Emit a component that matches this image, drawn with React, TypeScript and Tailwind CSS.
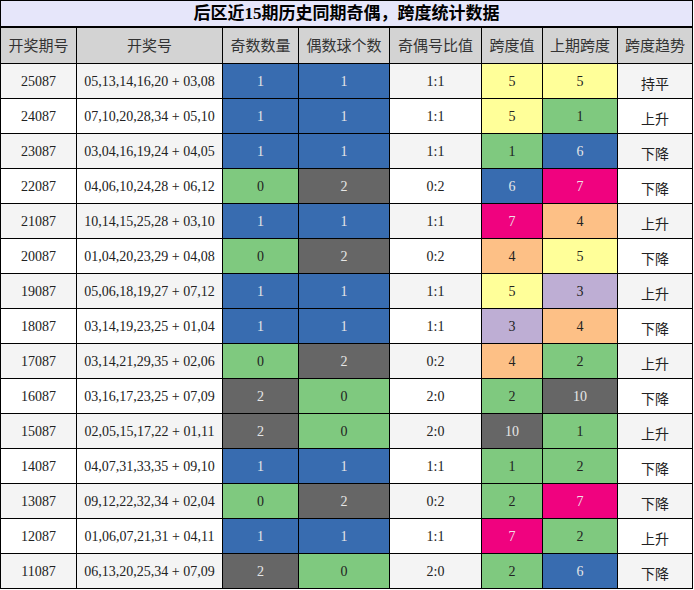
import React from "react";

type Row = [string, string, number, number, string, number, number, string];

const rows: Row[] = [
  ["25087", "05,13,14,16,20 + 03,08", 1, 1, "1:1", 5, 5, "持平"],
  ["24087", "07,10,20,28,34 + 05,10", 1, 1, "1:1", 5, 1, "上升"],
  ["23087", "03,04,16,19,24 + 04,05", 1, 1, "1:1", 1, 6, "下降"],
  ["22087", "04,06,10,24,28 + 06,12", 0, 2, "0:2", 6, 7, "下降"],
  ["21087", "10,14,15,25,28 + 03,10", 1, 1, "1:1", 7, 4, "上升"],
  ["20087", "01,04,20,23,29 + 04,08", 0, 2, "0:2", 4, 5, "下降"],
  ["19087", "05,06,18,19,27 + 07,12", 1, 1, "1:1", 5, 3, "上升"],
  ["18087", "03,14,19,23,25 + 01,04", 1, 1, "1:1", 3, 4, "下降"],
  ["17087", "03,14,21,29,35 + 02,06", 0, 2, "0:2", 4, 2, "上升"],
  ["16087", "03,16,17,23,25 + 07,09", 2, 0, "2:0", 2, 10, "下降"],
  ["15087", "02,05,15,17,22 + 01,11", 2, 0, "2:0", 10, 1, "上升"],
  ["14087", "04,07,31,33,35 + 09,10", 1, 1, "1:1", 1, 2, "下降"],
  ["13087", "09,12,22,32,34 + 02,04", 0, 2, "0:2", 2, 7, "下降"],
  ["12087", "01,06,07,21,31 + 04,11", 1, 1, "1:1", 7, 2, "上升"],
  ["11087", "06,13,20,25,34 + 07,09", 2, 0, "2:0", 2, 6, "下降"],
];

const headers = ["开奖期号", "开奖号", "奇数数量", "偶数球个数", "奇偶号比值", "跨度值", "上期跨度", "跨度趋势"];

const countCls: Record<number, string> = {
  0: "bg-[#7fc97f] text-[#222222]",
  1: "bg-[#386cb0] text-[#e6e6e6]",
  2: "bg-[#666666] text-[#e6e6e6]",
};

const spanCls: Record<number, string> = {
  1: "bg-[#7fc97f] text-[#222222]",
  2: "bg-[#7fc97f] text-[#222222]",
  3: "bg-[#beaed4] text-[#222222]",
  4: "bg-[#fdc086] text-[#222222]",
  5: "bg-[#ffff99] text-[#222222]",
  6: "bg-[#386cb0] text-[#e6e6e6]",
  7: "bg-[#f0027f] text-[#f0e0e8]",
  10: "bg-[#666666] text-[#e6e6e6]",
};

const font = { fontFamily: '"Liberation Serif", "Noto Sans CJK SC", serif' };

export default function App() {
  return (
    <div className="w-[693px] bg-white" style={font}>
      <div className="h-[28px] border border-black border-b-2 bg-[#e6e6fa] flex items-center justify-center text-[17px] font-bold text-black leading-none">
        后区近15期历史同期奇偶，跨度统计数据
      </div>
      <div className="grid grid-cols-[75px_145px_75px_90px_91px_60px_74px_74px] grid-rows-[35px] auto-rows-[34px] gap-px bg-black px-px pb-px">
        {headers.map((h) => (
          <div
            key={h}
            className="bg-[#d3d3d3] flex items-center justify-center text-[15px] text-[#333333]"
            style={{ fontFamily: '"Noto Sans CJK SC", sans-serif' }}
          >
            {h}
          </div>
        ))}
        {rows.map((r, i) => {
          const bg = i % 2 === 0 ? "bg-[#f4f4f4]" : "bg-white";
          const cell = "flex items-center justify-center text-[14px]";
          return (
            <React.Fragment key={r[0]}>
              <div className={`${cell} ${bg} text-[#222222]`}>{r[0]}</div>
              <div className={`${cell} ${bg} text-[#222222]`}>{r[1]}</div>
              <div className={`${cell} ${countCls[r[2]]}`}>{r[2]}</div>
              <div className={`${cell} ${countCls[r[3]]}`}>{r[3]}</div>
              <div className={`${cell} ${bg} text-[#222222]`}>{r[4]}</div>
              <div className={`${cell} ${spanCls[r[5]]}`}>{r[5]}</div>
              <div className={`${cell} ${spanCls[r[6]]}`}>{r[6]}</div>
              <div
                className={`${cell} ${bg} text-[#222222] pt-[4px]`}
                style={{ fontFamily: '"Noto Sans CJK SC", sans-serif' }}
              >
                {r[7]}
              </div>
            </React.Fragment>
          );
        })}
      </div>
    </div>
  );
}
